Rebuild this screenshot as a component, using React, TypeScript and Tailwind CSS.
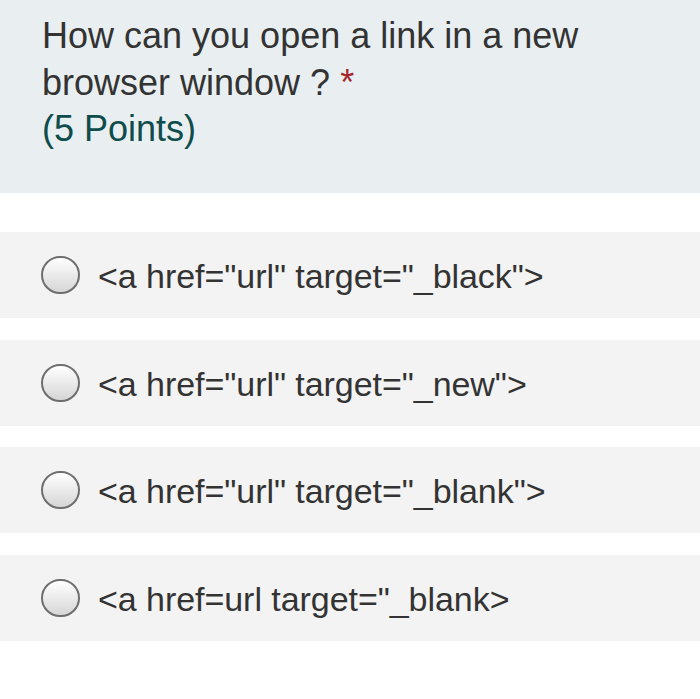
import React from "react";

const options = [
  '<a href="url" target="_black">',
  '<a href="url" target="_new">',
  '<a href="url" target="_blank">',
  '<a href=url target="_blank>',
];

function Radio() {
  return (
    <span className="block w-[39px] h-[38px] shrink-0 rounded-full border-2 border-[#6e6e6e] bg-gradient-to-b from-white to-[#d6d6d6]" />
  );
}

export default function App() {
  return (
    <div className="w-[700px] h-[699px] bg-white text-[#333333] font-['Liberation_Sans',Arial,sans-serif] overflow-hidden">
      <div className="h-[193px] bg-[#e9eff1] pl-[42px] pt-[13px]">
        <p className="text-[36px] leading-[46.5px]">
          How can you open a link in a new
          <br />
          browser window ? <span className="text-[#a4262c]">*</span>
        </p>
        <p className="text-[36px] leading-[46.5px] text-[#0f4c4c]">(5 Points)</p>
      </div>

      <div className="mt-[39px] flex flex-col gap-[21.5px]">
        {options.map((opt, i) => (
          <div key={i} className="h-[86px] bg-[#f3f3f3] flex items-center pl-[41px] gap-[18px]">
            <Radio />
            <span className="text-[34px] leading-none pt-[2px] tracking-[-0.05px]">{opt}</span>
          </div>
        ))}
      </div>
    </div>
  );
}
